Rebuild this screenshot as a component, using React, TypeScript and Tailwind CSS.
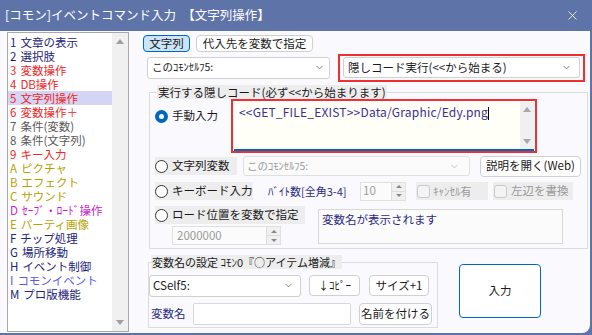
import { ChevronDown, X } from "lucide-react";

const items: [string, string, string][] = [
  ["1", "文章の表示", "text-[#23237a]"],
  ["2", "選択肢", "text-[#23237a]"],
  ["3", "変数操作", "text-[#f02828]"],
  ["4", "DB操作", "text-[#f02828]"],
  ["5", "文字列操作", "text-[#f02828]"],
  ["6", "変数操作＋", "text-[#f02828]"],
  ["7", "条件(変数)", "text-[#5a5a5a]"],
  ["8", "条件(文字列)", "text-[#5a5a5a]"],
  ["9", "キー入力", "text-[#f02828]"],
  ["A", "ピクチャ", "text-[#b4a400]"],
  ["B", "エフェクト", "text-[#b4a400]"],
  ["C", "サウンド", "text-[#b4a400]"],
  ["D", "ｾｰﾌﾞ・ﾛｰﾄﾞ操作", "text-[#c81ec8]"],
  ["E", "パーティ画像", "text-[#b4a400]"],
  ["F", "チップ処理", "text-[#23237a]"],
  ["G", "場所移動", "text-[#23237a]"],
  ["H", "イベント制御", "text-[#23237a]"],
  ["I", "コモンイベント", "text-[#5a5af0]"],
  ["M", "プロ版機能", "text-[#23237a]"],
];

const Radio = ({ on }: { on?: boolean }) =>
  on ? (
    <span className="w-[13px] h-[13px] rounded-full bg-[#0067c0] flex items-center justify-center shrink-0">
      <span className="w-[5px] h-[5px] rounded-full bg-white" />
    </span>
  ) : (
    <span className="w-[13px] h-[13px] rounded-full border border-[#333] bg-white shrink-0" />
  );

const Check = () => (
  <span className="w-[13px] h-[13px] rounded-[3px] border border-[#c8c8c8] bg-[#f4f4f4] shrink-0" />
);

const Spin = () => (
  <div className="w-[14px] h-full flex flex-col border-l border-[#ddd]">
    <div className="flex-1 flex items-center justify-center border-b border-[#ddd] bg-[#f0f0f0]">
      <span className="w-0 h-0 border-l-[3px] border-r-[3px] border-b-[3px] border-l-transparent border-r-transparent border-b-[#888]" />
    </div>
    <div className="flex-1 flex items-center justify-center bg-[#f0f0f0]">
      <span className="w-0 h-0 border-l-[3px] border-r-[3px] border-t-[3px] border-l-transparent border-r-transparent border-t-[#888]" />
    </div>
  </div>
);

const Btn = ({ children, className }: { children: React.ReactNode; className: string }) => (
  <div className={"flex items-center justify-center rounded-[4px] border border-[#d0d0d0] bg-white text-[#1a1a1a] " + className}>
    {children}
  </div>
);

const App = () => {
  return (
    <div className="w-[592px] h-[335px] bg-[#5e73a8] font-['Noto_Sans_CJK_JP','Noto_Sans',sans-serif] text-[11px] leading-none overflow-hidden">
      <div className="w-[590px] h-[333px] bg-[#f9f9fe] rounded-br-[8px] flex flex-col overflow-hidden">
        {/* title bar */}
        <div className="h-[31px] bg-[#5e73a8] text-white flex items-center justify-between pl-[5px] pr-[10px] shrink-0">
          <span className="text-[12.5px]">[コモン]イベントコマンド入力　【文字列操作】</span>
          <X size={15} strokeWidth={1.3} />
        </div>

        <div className="flex flex-1">
          {/* command list */}
          <div className="ml-[7px] mt-[1px] w-[122px] h-[300px] border border-[#a8a8a8] bg-white flex">
            <div className="flex-1 pt-[2px]">
              {items.map(([n, t, c], i) => (
                <div
                  key={n}
                  className={"h-[14px] flex items-center gap-[4px] pl-[2px] text-[11.5px] leading-[14px] " + c + (i === 4 ? " bg-[#d4d4f4]" : "")}
                >
                  <span>{n}</span>
                  <span>{t}</span>
                </div>
              ))}
            </div>
            <div className="w-[16px] bg-[#f0f0f0] flex flex-col justify-between items-center py-[6px]">
              <span className="w-0 h-0 border-l-[4px] border-r-[4px] border-b-[5px] border-l-transparent border-r-transparent border-b-[#a0a0a0]" />
              <span className="w-0 h-0 border-l-[4px] border-r-[4px] border-t-[5px] border-l-transparent border-r-transparent border-t-[#a0a0a0]" />
            </div>
          </div>

          {/* right side */}
          <div className="ml-[14px] flex flex-col">
            <div className="mt-[4px] flex gap-[6px] h-[17px] text-[11.5px]">
              <div className="w-[47px] rounded-[4px] border border-[#0067c0] bg-[#cce4f7] flex items-center justify-center text-[#1a1a1a]">文字列</div>
              <Btn className="w-[117px]">代入先を変数で指定</Btn>
            </div>

            <div className="mt-[1px] flex items-center h-[29px]">
              <div className="ml-[4px] w-[183px] h-[22px] border border-[#d0d0d0] rounded-[3px] bg-white flex items-center justify-between px-[4px] text-[#1a1a1a]">
                <span className="text-[10.5px]">このｺﾓﾝｾﾙﾌ5:</span>
                <ChevronDown size={11} className="text-[#777]" />
              </div>
              <div className="ml-[8px] w-[247px] h-[28px] border-2 border-[#f03030] flex items-center px-[3px]">
                <div className="w-full h-[21px] border border-[#d0d0d0] rounded-[3px] bg-white flex items-center justify-between px-[4px] text-[#1a1a1a] text-[11.5px]">
                  <span>隠しコード実行(&lt;&lt;から始まる)</span>
                  <ChevronDown size={11} className="text-[#777] mr-[3px]" />
                </div>
              </div>
            </div>

            {/* hidden code group */}
            <fieldset className="mt-[3px] ml-[6px] w-[439px] h-[164px] border border-[#dcdcdc] px-0">
              <legend className="ml-[7px] px-[1px] bg-[#ededed] h-[14px] text-[11.5px] text-[#1a1a1a] leading-[14px]">
                実行する隠しコード(必ず&lt;&lt;から始まります)
              </legend>
              <div className="flex h-[55px]">
                <div className="ml-[5px] mt-[11px] flex items-start gap-[4px] w-[76px] text-[11.5px] text-[#1a1a1a]">
                  <Radio on />
                  <span>手動入力</span>
                </div>
                <div className="w-[306px] h-[54px] border-2 border-[#f03030] pl-[1px] pr-[1px] pt-[1px]">
                  <div className="h-full bg-[#fffff8] border-b-2 border-[#0067c0] flex">
                    <div className="flex-1 pt-[4px] pl-[5px] text-[12px] text-[#3a3090] tracking-[0.2px]">
                      &lt;&lt;GET_FILE_EXIST&gt;&gt;Data/Graphic/Edy.png<span className="inline-block w-[1px] h-[13px] bg-black align-middle" />
                    </div>
                    <div className="w-[14px] bg-[#f0f0f0] flex flex-col justify-between items-center py-[5px]">
                      <span className="w-0 h-0 border-l-[4px] border-r-[4px] border-b-[5px] border-l-transparent border-r-transparent border-b-[#a8a8a8]" />
                      <span className="w-0 h-0 border-l-[4px] border-r-[4px] border-t-[5px] border-l-transparent border-r-transparent border-t-[#a8a8a8]" />
                    </div>
                  </div>
                </div>
              </div>

              <div className="flex items-center h-[22px] mt-[1px]">
                <div className="ml-[5px] w-[82px] h-[18px] bg-[#ededed] flex items-center gap-[4px] text-[11.5px] text-[#1a1a1a]">
                  <Radio />
                  <span>文字列変数</span>
                </div>
                <div className="ml-[6px] w-[227px] h-[20px] border border-[#e0e0e0] rounded-[3px] bg-[#fbfbfb] flex items-center justify-between px-[3px] text-[#9a9a9a]">
                  <span className="text-[10.5px]">このｺﾓﾝｾﾙﾌ5:</span>
                  <ChevronDown size={11} className="text-[#c0c0c0] mr-[6px]" />
                </div>
                <Btn className="ml-[10px] w-[101px] h-[21px] text-[11.5px]">説明を開く(Web)</Btn>
              </div>

              <div className="flex items-center h-[20px] mt-[4px]">
                <div className="ml-[5px] w-[98px] h-[18px] bg-[#ededed] flex items-center gap-[4px] text-[11.5px] text-[#1a1a1a]">
                  <Radio />
                  <span>キーボード入力</span>
                </div>
                <span className="ml-[15px] w-[90px] text-[#2a2a80] text-[11px]">ﾊﾞｲﾄ数[全角3-4]</span>
                <div className="ml-[2px] w-[46px] h-[19px] border border-[#e0e0e0] bg-[#fbfbfb] flex">
                  <span className="flex-1 flex items-center pl-[2px] text-[#9a9a9a] text-[11.5px]">10</span>
                  <Spin />
                </div>
                <div className="ml-[10px] w-[72px] h-[18px] bg-[#ededed] flex items-center gap-[3px] pl-[1px] text-[#9a9a9a] text-[11px]">
                  <Check />
                  <span>ｷｬﾝｾﾙ有</span>
                </div>
                <div className="ml-[5px] w-[80px] h-[18px] bg-[#ededed] flex items-center gap-[4px] pl-[1px] text-[#9a9a9a] text-[11.5px]">
                  <Check />
                  <span>左辺を書換</span>
                </div>
              </div>

              <div className="flex mt-[5px]">
                <div className="ml-[5px] flex flex-col">
                  <div className="w-[150px] h-[18px] bg-[#ededed] flex items-center gap-[4px] text-[11.5px] text-[#1a1a1a]">
                    <Radio />
                    <span>ロード位置を変数で指定</span>
                  </div>
                  <div className="ml-[17px] mt-[2px] w-[109px] h-[19px] border border-[#e0e0e0] bg-[#fbfbfb] flex">
                    <span className="flex-1 flex items-center pl-[4px] text-[#9a9a9a] text-[11.5px]">2000000</span>
                    <Spin />
                  </div>
                </div>
                <div className="ml-[13px] mt-[3px] w-[245px] h-[35px] border border-[#d8d8d8] bg-[#fbfbfb] px-[3px] pt-[4px] text-[#2a2a80] text-[11.5px]">
                  変数名が表示されます
                </div>
              </div>
            </fieldset>

            {/* bottom */}
            <div className="flex mt-[6px]">
              <fieldset className="ml-[5px] w-[290px] h-[73px] border border-[#dcdcdc] px-0">
                <legend className="ml-[2px] px-[1px] bg-[#ededed] h-[14px] text-[11px] text-[#1a1a1a] leading-[14px]">
                  変数名の設定 ｺﾓﾝ0『○アイテム増減』
                </legend>
                <div className="flex items-center h-[23px] mt-[5px]">
                  <div className="w-[152px] h-[22px] border border-[#d0d0d0] rounded-[3px] bg-white flex items-center justify-between px-[3px] text-[#1a1a1a] text-[11.5px]">
                    <span>CSelf5:</span>
                    <ChevronDown size={11} className="text-[#777] mr-[3px]" />
                  </div>
                  <Btn className="ml-[8px] w-[51px] h-[21px] text-[11px]">↓ｺﾋﾟｰ</Btn>
                  <Btn className="ml-[9px] w-[60px] h-[21px] text-[11.5px]">サイズ+1</Btn>
                </div>
                <div className="flex items-center h-[23px] mt-[5px]">
                  <span className="ml-[2px] w-[42px] text-[#2a2a80] text-[11.5px]">変数名</span>
                  <div className="w-[158px] h-[22px] border border-[#d8d8d8] rounded-[2px] bg-white" />
                  <Btn className="ml-[8px] w-[73px] h-[22px] text-[11.5px]">名前を付ける</Btn>
                </div>
              </fieldset>
              <div className="ml-[21px] mt-[9px] w-[82px] h-[54px] rounded-[4px] border border-[#0067c0] bg-white flex items-center justify-center text-[#1a1a1a] text-[11.5px]">
                入力
              </div>
            </div>
          </div>
        </div>
      </div>
    </div>
  );
};

export default App;
